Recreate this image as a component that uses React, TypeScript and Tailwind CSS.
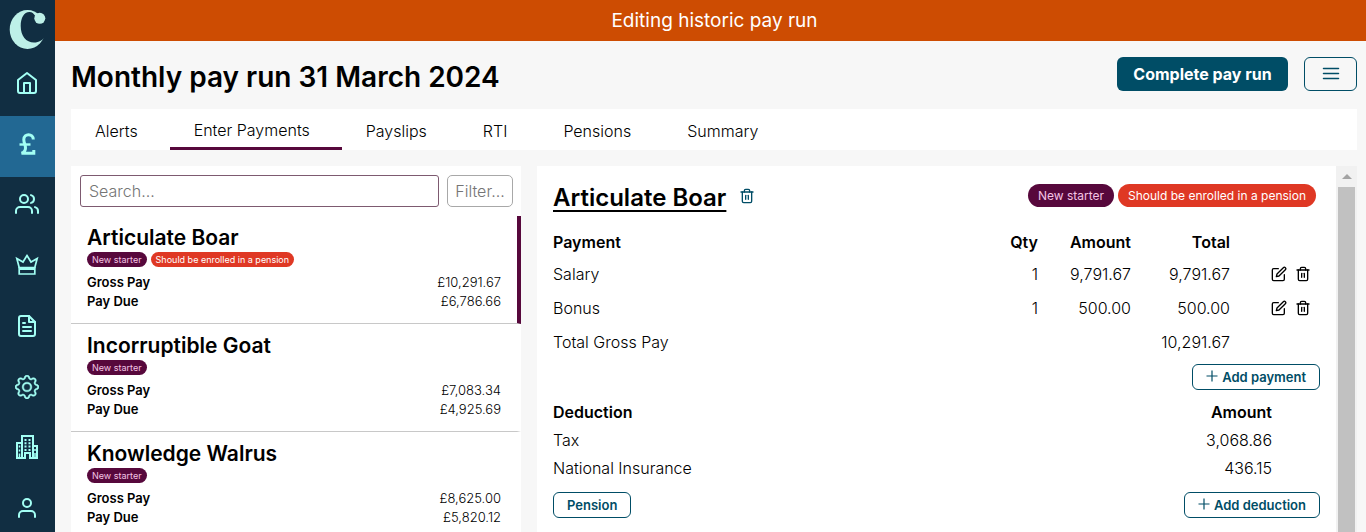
import { useState } from "react";
import type { ReactNode } from "react";
import { FiEdit, FiFileText, FiHome, FiTrash2, FiUser, FiUsers } from "react-icons/fi";
import { BsGear } from "react-icons/bs";

/* ---------- ICONS ---------- */

function Logo() {
  return (
    <svg width="54" height="55" viewBox="0 0 54 55" fill="#bdf0e8">
      <mask id="crescent">
        <ellipse cx="27.500" cy="29.500" rx="17.800" ry="19.500" fill="white" />
        <path
          d="M29.500 12C24 12 20.700 18 20.700 26c0 10 5.300 16.500 13.300 16.500 5 0 9-2.500 11-6L54 36V19H40c-5 0-5-7-10.500-7z"
          fill="black"
        />
      </mask>
      <path d="M0 0h54v55H0z" mask="url(#crescent)" />
      <circle cx="39.800" cy="18.300" r="5.500" />
    </svg>
  );
}

function PoundIcon() {
  return (
    <svg width="24" height="24" viewBox="0 0 24 24" fill="none" stroke="currentColor" strokeWidth="3">
      <path d="M18.300 7.500C18.300 1 8.800 1 8.800 7.500c0 3.500 1.700 5 1.700 8.500 0 2.500-1.300 4.300-4 5.200H18.800v-3.200" />
      <path d="M4.500 12.500h11" strokeWidth="2.400" />
    </svg>
  );
}

function CrownIcon() {
  return (
    <svg width="24" height="24" viewBox="0 0 24 24" fill="none" stroke="currentColor" strokeWidth="1.700">
      <path d="M4.200 14.500 1.800 5.500 8 9l4-6.500L16 9l6.200-3.500-2.400 9z" />
      <path d="M4.200 14v7h15.600v-7" />
      <path d="M4.200 15.500h15.600" strokeWidth="3" />
    </svg>
  );
}

function BuildingsIcon() {
  return (
    <svg width="24" height="24" viewBox="0 0 24 24" fill="none" stroke="currentColor" strokeWidth="2">
      <path d="M7 23V1h11v22M7 8H2v15h8v-5h5v5h7V11h-4" />
      <path d="M4.500 10.500v2M4.500 14.500v2M4.500 18.500v4M20 14v2M20 18v4" strokeWidth="1.500" />
      <path d="M10.500 4v12M14.500 4v12" strokeDasharray="2 1.300" />
    </svg>
  );
}

function MenuIcon() {
  return (
    <svg width="18" height="14" viewBox="0 0 18 14" stroke="currentColor" strokeWidth="1.500" strokeLinecap="round">
      <path d="M1.500 1.500h15M1.500 6.500h15M1.500 11.500h15" />
    </svg>
  );
}

function PlusIcon() {
  return (
    <svg width="12" height="12" viewBox="0 0 12 12" stroke="currentColor" strokeWidth="1.200" className="mb-[2px]">
      <path d="M6 .5v11M.5 6h11" />
    </svg>
  );
}

/* ---------- DATA ---------- */

const navItems = [
  { label: "Home", icon: <FiHome size={24} /> },
  { label: "Pay runs", icon: <PoundIcon /> },
  { label: "Employees", icon: <FiUsers size={24} /> },
  { label: "Premium", icon: <CrownIcon /> },
  { label: "Reports", icon: <FiFileText size={24} /> },
  { label: "Settings", icon: <BsGear size={24} strokeWidth={0.3} /> },
  { label: "Companies", icon: <BuildingsIcon /> },
  { label: "Account", icon: <FiUser size={24} /> },
];

const tabs = ["Alerts", "Enter Payments", "Payslips", "RTI", "Pensions", "Summary"];

const employees = [
  { name: "Articulate Boar", gross: "£10,291.67", due: "£6,786.66", pension: true },
  { name: "Incorruptible Goat", gross: "£7,083.34", due: "£4,925.69", pension: false },
  { name: "Knowledge Walrus", gross: "£8,625.00", due: "£5,820.12", pension: false },
];

const payments = [
  { name: "Salary", qty: 1, amount: "9,791.67", total: "9,791.67" },
  { name: "Bonus", qty: 1, amount: "500.00", total: "500.00" },
];

const deductions = [
  { name: "Tax", amount: "3,068.86" },
  { name: "National Insurance", amount: "436.15" },
];

/* ---------- PARTS ---------- */

function Badges({ pension, large }: { pension: boolean; large?: boolean }) {
  const size = large
    ? "h-[23px] px-[10px] text-[12px] leading-[23px]"
    : "h-[15px] px-[5px] text-[9px] leading-[15px]";
  return (
    <div className="flex gap-1 font-normal whitespace-nowrap">
      <span className={`rounded-full bg-[#57083c] text-[#f5c4e4] ${size}`}>New starter</span>
      {pension && (
        <span className={`rounded-full bg-[#df3824] text-white ${size}`}>
          Should be enrolled in a pension
        </span>
      )}
    </div>
  );
}

function SmallButton({ children }: { children: ReactNode }) {
  return (
    <button className="flex h-[26px] items-center gap-1 rounded-md border border-[#004d66] bg-white px-[13px] text-[13px] font-semibold text-[#004d66]">
      {children}
    </button>
  );
}

function Sidebar() {
  return (
    <aside className="w-[55px] shrink-0 bg-[#112e42] text-[#a3fff4]">
      <a href="#" aria-label="Dashboard" className="block h-[55px]">
        <Logo />
      </a>
      <nav className="grid h-[486px] auto-rows-fr">
        {navItems.map((item) => (
          <a
            key={item.label}
            href="#"
            aria-label={item.label}
            className={`flex items-center justify-center pr-px pb-[5px] ${item.label === "Pay runs" ? "bg-[#226893]" : ""}`}
          >
            {item.icon}
          </a>
        ))}
      </nav>
    </aside>
  );
}

function EmployeeList({ selected, onSelect }: { selected: string; onSelect: (name: string) => void }) {
  return (
    <section className="w-[450px] shrink-0 bg-white">
      <div className="flex gap-2 py-[9px] pr-2 pl-[9px]">
        <input
          type="text"
          aria-label="Search employees"
          placeholder="Search..."
          className="h-8 w-[359px] rounded-[3px] border border-[#7d5a70] px-2 placeholder:text-[#757575]"
        />
        <button className="h-8 flex-1 rounded-[5px] border border-[#a8a8a8] text-[#757575]">Filter...</button>
      </div>
      <ul>
        {employees.map((e) => (
          <li
            key={e.name}
            onClick={() => onSelect(e.name)}
            className={`h-[108px] cursor-pointer border-r-4 border-b border-b-[#c8c8c8] pt-2 pr-4 pl-4 ${
              e.name === selected ? "border-r-[#57083c]" : "border-r-white"
            }`}
          >
            <h3 className="text-[21px] leading-7 font-semibold">{e.name}</h3>
            <Badges pension={e.pension} />
            <dl className="mt-[6px] text-[13px] leading-[19px]">
              <div className="flex justify-between">
                <dt className="font-semibold">Gross Pay</dt>
                <dd>{e.gross}</dd>
              </div>
              <div className="flex justify-between">
                <dt className="font-semibold">Pay Due</dt>
                <dd>{e.due}</dd>
              </div>
            </dl>
          </li>
        ))}
      </ul>
    </section>
  );
}

function PaymentDetail({ name }: { name: string }) {
  return (
    <section className="min-w-0 flex-1 bg-white px-4 pt-3">
      <div className="flex h-12 items-start justify-between">
        <div className="flex items-start gap-[13px]">
          <h2 className="pt-1 text-[24px] leading-8 font-semibold underline decoration-2 underline-offset-4">
            {name}
          </h2>
          <button aria-label="Remove employee" className="pt-[10px] text-[#004d66]">
            <FiTrash2 size={16} />
          </button>
        </div>
        <div className="pt-[6px] pr-1">
          <Badges pension large />
        </div>
      </div>

      {/* PAYMENTS */}
      <table className="w-full table-fixed">
        <colgroup>
          <col />
          <col className="w-[80px]" />
          <col className="w-[93px]" />
          <col className="w-[99px]" />
          <col className="w-[90px]" />
        </colgroup>
        <thead>
          <tr className="h-[31px]">
            <th className="text-left font-semibold">Payment</th>
            <th className="text-right font-semibold">Qty</th>
            <th className="text-right font-semibold">Amount</th>
            <th className="text-right font-semibold">Total</th>
            <td />
          </tr>
        </thead>
        <tbody>
          {payments.map((p) => (
            <tr key={p.name} className="h-[34px]">
              <td>{p.name}</td>
              <td className="text-right">{p.qty}</td>
              <td className="text-right">{p.amount}</td>
              <td className="text-right">{p.total}</td>
              <td>
                <div className="flex justify-end gap-2 pr-[9px]">
                  <button aria-label={`Edit ${p.name}`}>
                    <FiEdit size={16} />
                  </button>
                  <button aria-label={`Delete ${p.name}`}>
                    <FiTrash2 size={16} />
                  </button>
                </div>
              </td>
            </tr>
          ))}
          <tr className="h-[34px]">
            <td>Total Gross Pay</td>
            <td />
            <td />
            <td className="text-right">10,291.67</td>
            <td />
          </tr>
        </tbody>
      </table>
      <div className="mt-[5px] flex justify-end">
        <SmallButton>
          <PlusIcon /> Add payment
        </SmallButton>
      </div>

      {/* DEDUCTIONS */}
      <table className="mt-2 w-full">
        <thead>
          <tr className="h-7">
            <th className="text-left font-semibold">Deduction</th>
            <th className="pr-12 text-right font-semibold">Amount</th>
          </tr>
        </thead>
        <tbody>
          {deductions.map((d) => (
            <tr key={d.name} className="h-7">
              <td>{d.name}</td>
              <td className="pr-12 text-right">{d.amount}</td>
            </tr>
          ))}
        </tbody>
      </table>
      <div className="mt-[10px] flex justify-between">
        <SmallButton>Pension</SmallButton>
        <SmallButton>
          <PlusIcon /> Add deduction
        </SmallButton>
      </div>
    </section>
  );
}

function ScrollTrack() {
  return (
    <div className="flex w-[21px] shrink-0 flex-col items-center bg-[#f1f1f1]">
      <div className="flex h-[21px] items-center">
        <svg width="10" height="5" viewBox="0 0 10 5" fill="#a3a3a3">
          <path d="M5 0l5 5H0z" />
        </svg>
      </div>
      <div className="w-[17px] flex-1 bg-[#c1c1c1]" />
    </div>
  );
}

export default function App() {
  const [tab, setTab] = useState("Enter Payments");
  const [selected, setSelected] = useState("Articulate Boar");

  return (
    <div className="flex h-screen overflow-hidden bg-[#f7f7f7] font-[Inter,sans-serif] text-[16px] leading-6 font-light text-black">
      <Sidebar />
      <div className="flex min-w-0 flex-1 flex-col">
        <div className="h-[41px] shrink-0 bg-[#cd4c02] pl-2 text-center text-[19px] leading-[41px] font-normal text-white">
          Editing historic pay run
        </div>
        <main className="flex min-h-0 flex-1 flex-col pr-[9px] pl-4">
          <header className="flex h-[68px] shrink-0 items-center justify-between">
            <h1 className="pt-1 text-[28px] leading-9 font-semibold">Monthly pay run 31 March 2024</h1>
            <div className="flex gap-4 pb-[2px]">
              <button className="h-[34px] w-[171px] rounded-md bg-[#004d66] font-bold text-white">
                Complete pay run
              </button>
              <button
                aria-label="More actions"
                className="flex h-[34px] w-[53px] items-center justify-center rounded-md border border-[#004d66] text-[#004d66]"
              >
                <MenuIcon />
              </button>
            </div>
          </header>

          {/* TABS */}
          <div role="tablist" className="flex h-[41px] shrink-0 bg-white">
            {tabs.map((t) => (
              <button
                key={t}
                role="tab"
                aria-selected={t === tab}
                onClick={() => setTab(t)}
                className={`pt-[3px] pr-8 pl-6 ${t === tab ? "border-b-[3px] border-[#57083c]" : ""}`}
              >
                {t}
              </button>
            ))}
          </div>

          <div className="mt-4 flex min-h-0 flex-1">
            <EmployeeList selected={selected} onSelect={setSelected} />
            <div className="ml-4 flex min-w-0 flex-1">
              <PaymentDetail name={selected} />
              <ScrollTrack />
            </div>
          </div>
        </main>
      </div>
    </div>
  );
}
